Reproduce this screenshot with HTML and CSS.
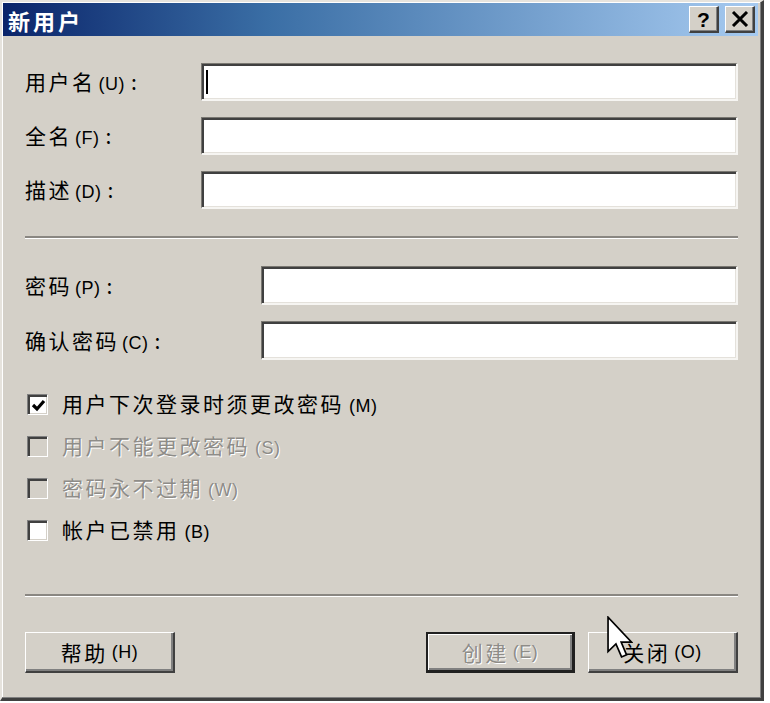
FILE: index.html
```html
<!DOCTYPE html>
<html lang="zh-CN">
<head>
<meta charset="utf-8">
<title>新用户</title>
<link rel="stylesheet" href="styles.css">
</head>
<body>
<div class="dialog">
  <div class="titlebar">
    <span class="title">新用户</span>
    <div class="tbtns">
      <span class="tbtn help">?</span>
      <span class="tbtn close"><svg width="18" height="16" viewBox="0 0 18 16"><path d="M2 1 L16 15 M16 1 L2 15" stroke="#000" stroke-width="3" fill="none"/></svg></span>
    </div>
  </div>
  <div class="content">
    <div class="grid g1">
      <span class="lbl">用户名<span class="k">(U)</span>:</span>
      <div class="field"><span class="caret"></span></div>
      <span class="lbl">全名<span class="k">(F)</span>:</span>
      <div class="field"></div>
      <span class="lbl">描述<span class="k">(D)</span>:</span>
      <div class="field"></div>
    </div>
    <div class="sep s1"></div>
    <div class="grid g2">
      <span class="lbl">密码<span class="k">(P)</span>:</span>
      <div class="field"></div>
      <span class="lbl">确认密码<span class="k">(C)</span>:</span>
      <div class="field"></div>
    </div>
    <div class="checks">
      <div class="chk">
        <span class="box"><svg width="17" height="17" viewBox="0 0 17 17"><polyline points="3,8 7,12 14,4" stroke="#000" stroke-width="3.2" fill="none"/></svg></span>
        <span class="ct">用户下次登录时须更改密码<span class="k">(M)</span></span>
      </div>
      <div class="chk disabled">
        <span class="box"></span>
        <span class="ct">用户不能更改密码<span class="k">(S)</span></span>
      </div>
      <div class="chk disabled">
        <span class="box"></span>
        <span class="ct">密码永不过期<span class="k">(W)</span></span>
      </div>
      <div class="chk">
        <span class="box"></span>
        <span class="ct">帐户已禁用<span class="k">(B)</span></span>
      </div>
    </div>
    <div class="sep s2"></div>
    <div class="buttons">
      <span class="btn">帮助<span class="k">(H)</span></span>
      <span class="spacer"></span>
      <span class="btn default disabled">创建<span class="k">(E)</span></span>
      <span class="btn">关闭<span class="k">(O)</span></span>
    </div>
  </div>
  <svg class="cursor" width="26" height="44" viewBox="0 0 12.5 21">
    <path d="M0.5 0.5 L0.5 17 L4.3 13.3 L7 19.6 L9.4 18.6 L6.8 12.5 L11.8 12.5 Z" fill="#fff" stroke="#000" stroke-width="0.8" stroke-linejoin="miter"/>
  </svg>
</div>
</body>
</html>
```

FILE: styles.css
```css
html, body {
  margin: 0;
  padding: 0;
}
body {
  width: 770px;
  height: 703px;
  overflow: hidden;
  background: #ffffff;
  font-family: "Noto Sans CJK SC", "Noto Sans", sans-serif;
  color: #000;
}
.dialog {
  position: relative;
  width: 764px;
  height: 701px;
  box-sizing: border-box;
  background: #d4d0c8;
  border-style: solid;
  border-width: 2px 3px 3px 2px;
  border-color: #e6e3dd #404040 #404040 #e6e3dd;
  box-shadow: inset -1px -1px 0 #808080, inset 1px 1px 0 #ffffff;
  padding: 1px;
  display: flex;
  flex-direction: column;
}
.titlebar {
  height: 33px;
  margin-right: 2px;
  display: flex;
  align-items: center;
  justify-content: space-between;
  padding: 0 3px 0 5px;
  background: linear-gradient(to right, #0a246a 0%, #3a6ea5 35%, #a6caf0 100%);
}
.title {
  color: #fff;
  font-weight: bold;
  font-size: 22px;
  letter-spacing: 3px;
  line-height: 1;
}
.tbtns {
  display: flex;
  gap: 6px;
}
.tbtn {
  width: 30px;
  height: 27px;
  box-sizing: border-box;
  background: #d4d0c8;
  border-style: solid;
  border-width: 1px 2px 2px 1px;
  border-color: #fff #404040 #404040 #fff;
  box-shadow: inset -1px -1px 0 #808080;
  display: flex;
  align-items: center;
  justify-content: center;
}
.tbtn.help {
  font-family: "Liberation Sans", sans-serif;
  font-weight: bold;
  font-size: 21px;
  line-height: 1;
}
.content {
  padding: 27px 22px 0 22px;
  display: flex;
  flex-direction: column;
}
.grid {
  display: grid;
  row-gap: 16px;
  align-items: center;
}
.g1 {
  grid-template-columns: 176px 1fr;
  grid-auto-rows: 38px;
}
.g2 {
  grid-template-columns: 236px 1fr;
  grid-auto-rows: 39px;
  margin-top: 27px;
}
.lbl, .ct, .btn {
  font-size: 21px;
  letter-spacing: 2.5px;
  line-height: 1;
  white-space: nowrap;
}
.k {
  font-family: "Liberation Sans", sans-serif;
  font-size: 18px;
  letter-spacing: 0.5px;
  margin-left: 3px;
}
.lbl .k {
  margin-right: 6px;
}
.field {
  height: 100%;
  box-sizing: border-box;
  background: #fff;
  border-style: solid;
  border-width: 1px 2px 2px 1px;
  border-color: #7a7872 #f6f5f2 #f6f5f2 #7a7872;
  box-shadow: inset 2px 2px 0 #404040, inset -1px -1px 0 #e4e1db;
  display: flex;
  align-items: center;
  padding-left: 4px;
}
.caret {
  width: 2px;
  height: 24px;
  background: #000;
}
.sep {
  border-top: 2px solid #8a8782;
  border-bottom: 1px solid #ffffff;
}
.s1 {
  margin-top: 27px;
}
.s2 {
  margin-top: 43px;
}
.checks {
  margin-top: 23px;
  display: flex;
  flex-direction: column;
}
.chk {
  height: 42px;
  display: flex;
  align-items: center;
}
.box {
  width: 21px;
  height: 21px;
  margin-left: 2px;
  box-sizing: border-box;
  background: #fff;
  border-style: solid;
  border-width: 1px;
  border-color: #808080 #fff #fff #808080;
  box-shadow: inset 2px 2px 0 #404040, inset -1px -1px 0 #d4d0c8;
  display: flex;
  align-items: center;
  justify-content: center;
  padding: 2px 0 0 2px;
}
.ct {
  margin-left: 14px;
}
.ct .k {
  margin-left: 5px;
}
.chk.disabled .box {
  background: #d4d0c8;
}
.chk.disabled .ct, .btn.disabled {
  color: #8e8c88;
  text-shadow: 1px 1px 0 #ffffff;
}
.buttons {
  margin-top: 35px;
  display: flex;
  gap: 13px;
}
.spacer {
  flex: 1;
}
.btn {
  width: 150px;
  height: 41px;
  box-sizing: border-box;
  background: #d4d0c8;
  border-style: solid;
  border-width: 1px 2px 2px 1px;
  border-color: #ffffff #404040 #404040 #ffffff;
  box-shadow: inset -2px -2px 0 #808080;
  display: flex;
  align-items: center;
  justify-content: center;
  font-size: 21px;
}
.btn .k {
  margin-left: 4px;
}
.btn.default {
  width: 149px;
  border-width: 2px 3px 3px 2px;
  border-color: #202020;
  box-shadow: inset 1px 1px 0 #ffffff, inset -2px -2px 0 #808080;
}
.cursor {
  position: absolute;
  left: 605px;
  top: 614px;
}
```
